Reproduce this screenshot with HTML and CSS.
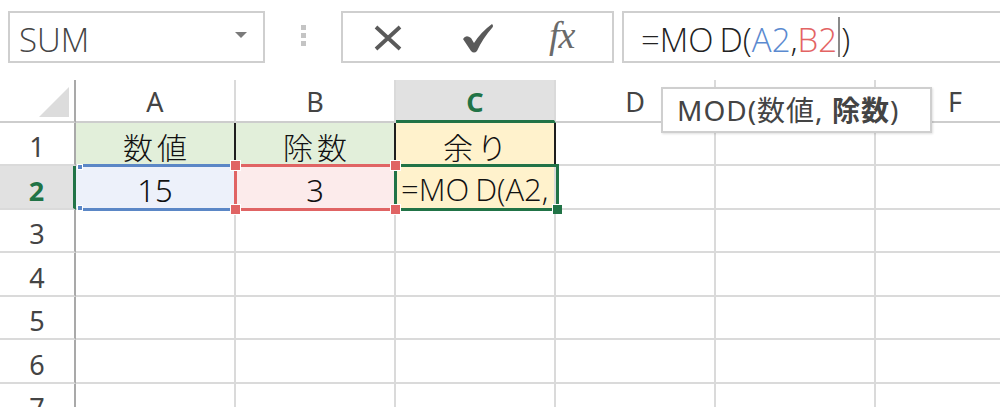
FILE: index.html
```html
<!DOCTYPE html>
<html lang="ja">
<head>
<meta charset="utf-8">
<link rel="stylesheet" href="styles.css">
</head>
<body>
<div class="app">
  <div class="fbar">
    <div class="namebox"><span class="name">SUM</span><span class="drop"></span></div>
    <div class="grip"><i></i><i></i><i></i></div>
    <div class="btns">
      <svg class="ico" width="32" height="32" viewBox="0 0 32 32"><path d="M4 5 L28 27 M28 5 L4 27" stroke="#5a5a5a" stroke-width="3.8" fill="none"/></svg>
      <svg class="ico" width="34" height="32" viewBox="0 0 34 32"><path d="M2 17 Q5 12 10 16 L13 21 Q20 10 31 2 Q33 4 31 6 Q22 16 16 29 Q13 32 10 29 Z" fill="#5a5a5a"/></svg>
      <span class="fx">fx</span>
    </div>
    <div class="formula">=MO<span class="gap">D</span>(<span class="ref-a">A2</span>,<span class="ref-b">B2</span><span class="cursor"></span>)</div>
  </div>
  <div class="sheet">
    <div class="grid">
      <div class="corner"><span class="tri"></span></div>
      <div class="ch">A</div>
      <div class="ch">B</div>
      <div class="ch sel">C</div>
      <div class="ch">D</div>
      <div class="ch"></div>
      <div class="ch">F</div>

      <div class="rh">1</div>
      <div class="c hd green bl">数値</div>
      <div class="c hd green bl">除数</div>
      <div class="c hd yellow bl">余り</div>
      <div class="c"></div>
      <div class="c"></div>
      <div class="c"></div>

      <div class="rh sel">2</div>
      <div class="c num blue-cell"><span class="ov ov-a"><i class="k tl"></i><i class="k bl2"></i></span>15</div>
      <div class="c num red-cell"><span class="ov ov-b"><i class="k tl"></i><i class="k tr"></i><i class="k bl2"></i><i class="k br"></i></span>3</div>
      <div class="c active"><span class="ov ov-c"><i class="handle"></i></span><span class="edit">=MO<span class="gap">D</span>(A2,</span></div>
      <div class="c"></div>
      <div class="c"></div>
      <div class="c"></div>

      <div class="rh">3</div><div class="c"></div><div class="c"></div><div class="c"></div><div class="c"></div><div class="c"></div><div class="c"></div>
      <div class="rh">4</div><div class="c"></div><div class="c"></div><div class="c"></div><div class="c"></div><div class="c"></div><div class="c"></div>
      <div class="rh">5</div><div class="c"></div><div class="c"></div><div class="c"></div><div class="c"></div><div class="c"></div><div class="c"></div>
      <div class="rh">6</div><div class="c"></div><div class="c"></div><div class="c"></div><div class="c"></div><div class="c"></div><div class="c"></div>
      <div class="rh">7</div><div class="c"></div><div class="c"></div><div class="c"></div><div class="c"></div><div class="c"></div><div class="c"></div>
    </div>
    <div class="tip">MOD(数値, <b>除数</b>)</div>
  </div>
</div>
</body>
</html>
```

FILE: styles.css
```css
* { box-sizing: border-box; }
html, body {
  margin: 0;
  padding: 0;
  background: #fff;
  width: 1000px;
  height: 407px;
  overflow: hidden;
}
body {
  font-family: "Noto Sans", "Noto Sans CJK JP", sans-serif;
  color: #222;
}
.app { width: 1000px; overflow: hidden; }

/* formula bar */
.fbar {
  display: flex;
  align-items: stretch;
  height: 63px;
  padding: 11px 0 0 8px;
  margin-bottom: 17px;
}
.namebox {
  width: 257px;
  border: 2px solid #cfcfcf;
  display: flex;
  align-items: center;
  justify-content: space-between;
  padding: 0 16px 0 9px;
}
.name {
  font-family: "Open Sans", "Noto Sans", sans-serif;
  font-weight: 300;
  font-size: 33px;
  color: #444;
  line-height: 1;
  padding-top: 4px;
}
.drop {
  width: 0; height: 0;
  border-left: 6px solid transparent;
  border-right: 6px solid transparent;
  border-top: 6px solid #7a7a7a;
  margin-top: -5px;
}
.grip {
  width: 76px;
  display: flex;
  flex-direction: column;
  align-items: center;
  padding-top: 14px;
  gap: 3px;
}
.grip i {
  display: block;
  width: 5px;
  height: 5px;
  background: #c4c4c4;
}
.btns {
  width: 273px;
  border: 2px solid #cfcfcf;
  display: flex;
  align-items: center;
  padding: 2px 0 0 29px;
}
.btns .ico:first-child { margin-right: 57px; }
.btns .ico:nth-child(2) { margin-right: 54px; }
.fx {
  font-family: "Liberation Serif", serif;
  font-style: italic;
  font-size: 38px;
  color: #6a6a6a;
  letter-spacing: -1px;
  line-height: 1;
  margin-top: -6px;
}
.formula {
  flex: 1;
  margin-left: 8px;
  border: 2px solid #cfcfcf;
  border-right: none;
  display: flex;
  align-items: center;
  padding: 4px 0 0 17px;
  font-family: "Open Sans", "Noto Sans", sans-serif;
  font-weight: 300;
  font-size: 33px;
  color: #222;
  line-height: 1;
  white-space: nowrap;
}
.gap { margin-left: 6px; }
.ref-a { color: #5b8ad0; }
.ref-b { color: #e36464; }
.cursor {
  display: inline-block;
  width: 2px;
  height: 40px;
  background: #8a8a8a;
  margin: -4px 1px 0;
}

/* sheet */
.sheet {
  position: relative;
  width: 1000px;
  height: 327px;
  overflow: hidden;
}
.grid {
  display: grid;
  grid-template-columns: 76px repeat(6, 160px);
  grid-template-rows: 43px 43px 44px 43px 44px 43px 44px 43px;
  width: 1036px;
}
.corner {
  position: relative;
  border-right: 2px solid #a9a9a9;
  border-bottom: 2px solid #cdcdcd;
}
.tri {
  position: absolute;
  right: 5px;
  bottom: 4px;
  width: 0; height: 0;
  border-left: 30px solid transparent;
  border-bottom: 30px solid #dcdcdc;
}
.ch {
  display: flex;
  align-items: center;
  justify-content: center;
  font-family: "Noto Sans", sans-serif;
  font-size: 27px;
  color: #444;
  border-right: 2px solid #dadada;
  border-bottom: 2px solid #cdcdcd;
  padding-top: 2px;
  line-height: 1;
}
.ch.sel {
  background: #e1e1e1;
  color: #217346;
  font-weight: 700;
  border-bottom: 3px solid #217346;
}
.rh {
  display: flex;
  align-items: center;
  justify-content: center;
  font-family: "Noto Sans", sans-serif;
  font-size: 27px;
  color: #444;
  border-right: 2px solid #a9a9a9;
  border-bottom: 2px solid #dadada;
  padding-top: 6px;
  line-height: 1;
}
.rh.sel {
  background: #e1e1e1;
  color: #217346;
  font-weight: 700;
  border-right: 3px solid #217346;
}
.c {
  position: relative;
  border-right: 2px solid #dadada;
  border-bottom: 2px solid #dadada;
  display: flex;
  align-items: center;
  justify-content: center;
  font-family: "Noto Sans CJK JP", "Noto Sans", sans-serif;
  font-weight: 300;
  font-size: 30px;
  color: #111;
  line-height: 1;
}
.c.hd { letter-spacing: 4px; padding-left: 4px; padding-top: 5px; }
.c.bl { border-right: 2px solid #1e1e1e; }
.green { background: #e2efda; }
.yellow { background: #fff2cc; }
.blue-cell { background: #edf1fa; }
.red-cell { background: #fcebeb; }
.num { font-family: "Noto Sans", sans-serif; font-weight: 300; font-size: 31px; padding-top: 6px; }
.active {
  background: #fff2cc;
  justify-content: flex-start;
}
.edit {
  font-family: "Open Sans", "Noto Sans", sans-serif;
  font-weight: 300;
  font-size: 31px;
  color: #111;
  padding-left: 5px;
  white-space: nowrap;
  padding-top: 5px;
}

/* selection overlays */
.ov {
  position: absolute;
  border: 3px solid;
  pointer-events: none;
}
.ov-a { border-color: #5b87c6; border-left-color: transparent; left: 1px; top: -2px; width: 160px; height: 47px; z-index: 2; }
.ov-b { border-color: #e06464; border-right-color: transparent; left: -2px; top: -2px; width: 163px; height: 47px; z-index: 5; }
.ov-c { border-color: #217346; left: -2px; top: -2px; width: 165px; height: 47px; z-index: 4; }
.k {
  position: absolute;
  display: block;
  border: 1px solid #fff;
}
.ov-a .k { width: 6px; height: 6px; background: #5b87c6; }
.ov-a .tl { left: -3px; top: -3px; }
.ov-a .bl2 { left: -3px; bottom: -3px; }
.ov-b .k { width: 11px; height: 11px; background: #e06464; z-index: 6; }
.ov-b .tl { left: -7px; top: -7px; }
.ov-b .tr { right: -7px; top: -7px; }
.ov-b .bl2 { left: -7px; bottom: -7px; }
.ov-b .br { right: -7px; bottom: -7px; }
.handle {
  position: absolute;
  right: -6px;
  bottom: -6px;
  width: 10px;
  height: 10px;
  background: #217346;
  border: 1px solid #fff;
  border-right: none;
  border-bottom: none;
}

/* tooltip */
.tip {
  position: absolute;
  left: 661px;
  top: 7px;
  width: 271px;
  height: 46px;
  background: #fff;
  border: 2px solid #cfcfcf;
  box-shadow: 1px 1px 2px rgba(0,0,0,0.12);
  font-family: "Noto Sans", "Noto Sans CJK JP", sans-serif;
  font-size: 28px;
  letter-spacing: 1px;
  color: #444;
  padding: 3px 0 0 14px;
  white-space: nowrap;
  z-index: 10;
  line-height: 1.3;
}
.tip b { font-weight: 700; color: #444; }
```
